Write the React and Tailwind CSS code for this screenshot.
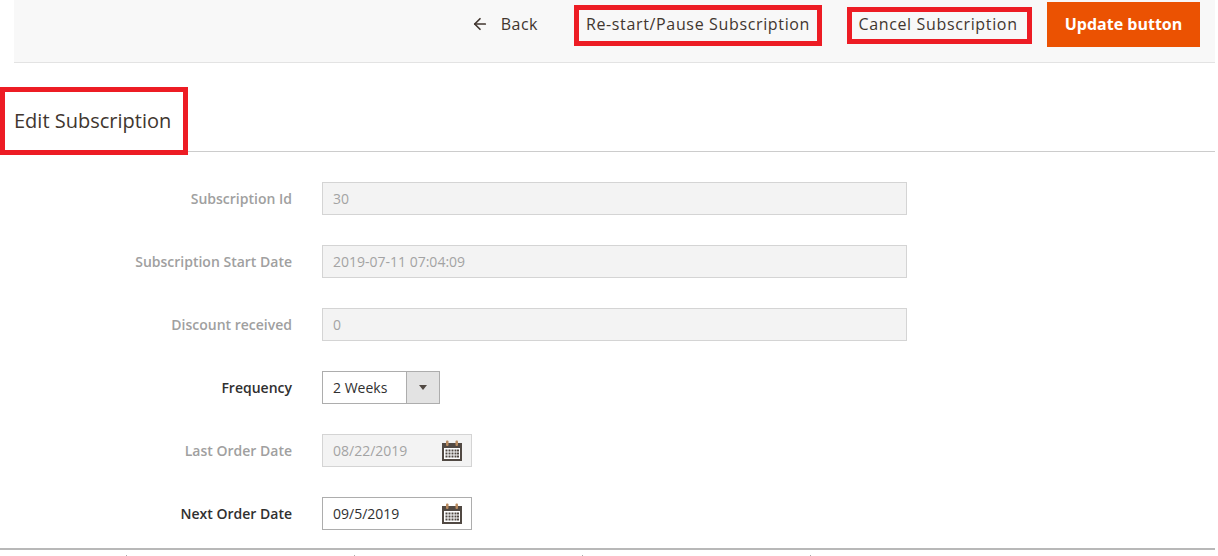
import { ArrowLeft } from 'lucide-react'

function CalendarIcon() {
  return (
    <svg width="22" height="22" viewBox="0 0 22 22" className="shrink-0">
      <rect x="1" y="3" width="20" height="18" fill="#514943" />
      <rect x="3" y="8" width="16" height="11" fill="#ffffff" />
      <rect x="5" y="0.5" width="2.5" height="5.5" rx="1" fill="#b98a5e" />
      <rect x="14.5" y="0.5" width="2.5" height="5.5" rx="1" fill="#b98a5e" />
      <g fill="#514943">
        {[9.5, 12.5, 15.5].map(y =>
          [4.5, 7.5, 10.5, 13.5, 16].map(x => (
            <rect key={`${x}-${y}`} x={x} y={y} width="2" height="2" />
          ))
        )}
      </g>
    </svg>
  )
}

function Label({ children, active }) {
  return (
    <label className={`w-[292px] shrink-0 text-right text-sm font-semibold ${active ? 'text-[#303030]' : 'text-[#a0a0a0]'}`}>
      {children}
    </label>
  )
}

function Row({ label, active, children }) {
  return (
    <div className="flex items-center gap-[30px] h-[33px]">
      <Label active={active}>{label}</Label>
      {children}
    </div>
  )
}

function DisabledInput({ value }) {
  return (
    <div className="w-[585px] h-[33px] flex items-center px-[10px] bg-[#f3f3f3] border border-[#d4d4d4] text-sm text-[#a3a3a3]">
      {value}
    </div>
  )
}

function DateInput({ value, disabled }) {
  return (
    <div className={`w-[150px] h-[33px] flex items-center justify-between pl-[10px] pr-[8px] border text-sm ${disabled ? 'bg-[#f3f3f3] border-[#d4d4d4] text-[#a3a3a3]' : 'bg-white border-[#adadad] text-[#303030]'}`}>
      {value}
      <CalendarIcon />
    </div>
  )
}

export default function App() {
  return (
    <div className="relative w-[1218px] h-[556px] overflow-hidden bg-white font-['Open_Sans',sans-serif] text-[#303030]">
      {/* Action bar */}
      <div className="ml-[14px] mr-[3px] h-[63px] bg-[#f8f8f8] border-b border-[#e3e3e3] flex items-start justify-end pr-[15px] pt-[2px]">
        <button className="flex items-center gap-[12px] h-[45px] pb-[2px] mr-[36px] text-[16px] tracking-[0.5px] font-medium text-[#41362f]">
          <ArrowLeft size={18} strokeWidth={2.25} />
          Back
        </button>
        <button className="w-[248px] h-[41px] mt-[3px] mr-[25px] pb-[3px] border-[5px] border-[#ed1c24] text-base font-medium text-[#41362f] tracking-[0.65px]">
          Re-start/Pause Subscription
        </button>
        <button className="w-[185px] h-[37px] mt-[5px] mr-[15px] pb-[3px] pr-[3px] border-[5px] border-[#ed1c24] text-base font-medium text-[#41362f] tracking-[0.65px]">
          Cancel Subscription
        </button>
        <button className="w-[153px] h-[45px] pb-[2px] bg-[#eb5202] text-base font-bold text-white">
          Update button
        </button>
      </div>

      {/* Page title */}
      <div className="flex items-end mt-[24px] mr-[3px]">
        <h1 className="w-[188px] h-[68px] shrink-0 flex items-center pl-[9px] border-[5px] border-[#ed1c24] text-xl font-normal text-[#41362f]">
          Edit Subscription
        </h1>
        <div className="flex-1 mb-[3px] border-b border-[#cccccc]" />
      </div>

      {/* Form */}
      <div className="mt-[27px] flex flex-col gap-[30px]">
        <Row label="Subscription Id"><DisabledInput value="30" /></Row>
        <Row label="Subscription Start Date"><DisabledInput value="2019-07-11 07:04:09" /></Row>
        <Row label="Discount received"><DisabledInput value="0" /></Row>
        <Row label="Frequency" active>
          <div className="w-[118px] h-[33px] flex border border-[#adadad] text-sm text-[#303030]">
            <div className="flex-1 flex items-center pl-[10px]">2 Weeks</div>
            <div className="w-[33px] flex items-center justify-center bg-[#e3e3e3] border-l border-[#adadad]">
              <div className="w-0 h-0 border-x-[4px] border-x-transparent border-t-[5px] border-t-[#514943]" />
            </div>
          </div>
        </Row>
        <Row label="Last Order Date"><DateInput value="08/22/2019" disabled /></Row>
        <Row label="Next Order Date" active><DateInput value="09/5/2019" /></Row>
      </div>

      {/* Bottom rule */}
      <div className="mt-[18px] mr-[3px] border-t-2 border-[#b8b8b8]" />
      <div className="flex mt-[5px] pl-[126px] gap-[227px]">
        {[0, 1, 2, 3].map(i => <div key={i} className="w-px h-px bg-[#aaaaaa]" />)}
      </div>
    </div>
  )
}
